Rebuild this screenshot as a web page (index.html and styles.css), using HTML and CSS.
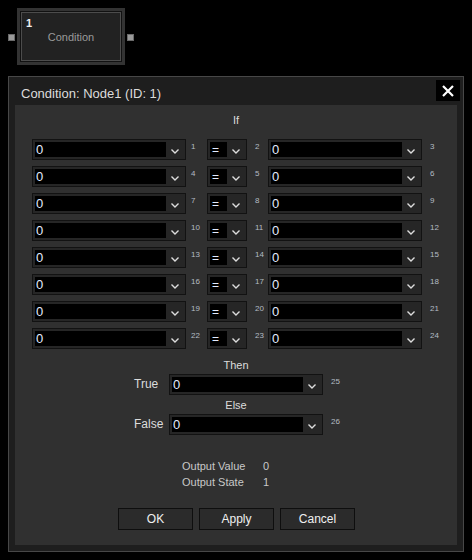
FILE: index.html
```html
<!DOCTYPE html>
<html>
<head>
<meta charset="utf-8">
<link rel="stylesheet" href="styles.css">
</head>
<body>
<div class="node-area">
  <div class="port"></div>
  <div class="node">
    <div class="node-inner">
      <div class="node-id">1</div>
      <div class="node-name">Condition</div>
    </div>
  </div>
  <div class="port"></div>
</div>

<div class="dialog">
  <div class="titlebar">
    <div class="title">Condition: Node1 (ID: 1)</div>
    <div class="close"><svg width="12" height="12" viewBox="0 0 12 12"><path d="M1 1L11 11M11 1L1 11" stroke="#fff" stroke-width="2.2" fill="none"/></svg></div>
  </div>
  <div class="panel">
    <div class="heading if">If</div>
    <div class="rows">
      <div class="combo wide"><div class="field">0</div><div class="chev"><svg width="8" height="5" viewBox="0 0 8 5"><polyline points="0.5,0.5 4,4 7.5,0.5" stroke="#ddd" stroke-width="1.4" fill="none"/></svg></div></div>
      <div class="num n1">1</div>
      <div class="combo op"><div class="field">=</div><div class="chev"><svg width="8" height="5" viewBox="0 0 8 5"><polyline points="0.5,0.5 4,4 7.5,0.5" stroke="#ddd" stroke-width="1.4" fill="none"/></svg></div></div>
      <div class="num">2</div>
      <div class="combo wide"><div class="field">0</div><div class="chev"><svg width="8" height="5" viewBox="0 0 8 5"><polyline points="0.5,0.5 4,4 7.5,0.5" stroke="#ddd" stroke-width="1.4" fill="none"/></svg></div></div>
      <div class="num">3</div>

      <div class="combo wide"><div class="field">0</div><div class="chev"><svg width="8" height="5" viewBox="0 0 8 5"><polyline points="0.5,0.5 4,4 7.5,0.5" stroke="#ddd" stroke-width="1.4" fill="none"/></svg></div></div>
      <div class="num n1">4</div>
      <div class="combo op"><div class="field">=</div><div class="chev"><svg width="8" height="5" viewBox="0 0 8 5"><polyline points="0.5,0.5 4,4 7.5,0.5" stroke="#ddd" stroke-width="1.4" fill="none"/></svg></div></div>
      <div class="num">5</div>
      <div class="combo wide"><div class="field">0</div><div class="chev"><svg width="8" height="5" viewBox="0 0 8 5"><polyline points="0.5,0.5 4,4 7.5,0.5" stroke="#ddd" stroke-width="1.4" fill="none"/></svg></div></div>
      <div class="num">6</div>

      <div class="combo wide"><div class="field">0</div><div class="chev"><svg width="8" height="5" viewBox="0 0 8 5"><polyline points="0.5,0.5 4,4 7.5,0.5" stroke="#ddd" stroke-width="1.4" fill="none"/></svg></div></div>
      <div class="num n1">7</div>
      <div class="combo op"><div class="field">=</div><div class="chev"><svg width="8" height="5" viewBox="0 0 8 5"><polyline points="0.5,0.5 4,4 7.5,0.5" stroke="#ddd" stroke-width="1.4" fill="none"/></svg></div></div>
      <div class="num">8</div>
      <div class="combo wide"><div class="field">0</div><div class="chev"><svg width="8" height="5" viewBox="0 0 8 5"><polyline points="0.5,0.5 4,4 7.5,0.5" stroke="#ddd" stroke-width="1.4" fill="none"/></svg></div></div>
      <div class="num">9</div>

      <div class="combo wide"><div class="field">0</div><div class="chev"><svg width="8" height="5" viewBox="0 0 8 5"><polyline points="0.5,0.5 4,4 7.5,0.5" stroke="#ddd" stroke-width="1.4" fill="none"/></svg></div></div>
      <div class="num n1">10</div>
      <div class="combo op"><div class="field">=</div><div class="chev"><svg width="8" height="5" viewBox="0 0 8 5"><polyline points="0.5,0.5 4,4 7.5,0.5" stroke="#ddd" stroke-width="1.4" fill="none"/></svg></div></div>
      <div class="num">11</div>
      <div class="combo wide"><div class="field">0</div><div class="chev"><svg width="8" height="5" viewBox="0 0 8 5"><polyline points="0.5,0.5 4,4 7.5,0.5" stroke="#ddd" stroke-width="1.4" fill="none"/></svg></div></div>
      <div class="num">12</div>

      <div class="combo wide"><div class="field">0</div><div class="chev"><svg width="8" height="5" viewBox="0 0 8 5"><polyline points="0.5,0.5 4,4 7.5,0.5" stroke="#ddd" stroke-width="1.4" fill="none"/></svg></div></div>
      <div class="num n1">13</div>
      <div class="combo op"><div class="field">=</div><div class="chev"><svg width="8" height="5" viewBox="0 0 8 5"><polyline points="0.5,0.5 4,4 7.5,0.5" stroke="#ddd" stroke-width="1.4" fill="none"/></svg></div></div>
      <div class="num">14</div>
      <div class="combo wide"><div class="field">0</div><div class="chev"><svg width="8" height="5" viewBox="0 0 8 5"><polyline points="0.5,0.5 4,4 7.5,0.5" stroke="#ddd" stroke-width="1.4" fill="none"/></svg></div></div>
      <div class="num">15</div>

      <div class="combo wide"><div class="field">0</div><div class="chev"><svg width="8" height="5" viewBox="0 0 8 5"><polyline points="0.5,0.5 4,4 7.5,0.5" stroke="#ddd" stroke-width="1.4" fill="none"/></svg></div></div>
      <div class="num n1">16</div>
      <div class="combo op"><div class="field">=</div><div class="chev"><svg width="8" height="5" viewBox="0 0 8 5"><polyline points="0.5,0.5 4,4 7.5,0.5" stroke="#ddd" stroke-width="1.4" fill="none"/></svg></div></div>
      <div class="num">17</div>
      <div class="combo wide"><div class="field">0</div><div class="chev"><svg width="8" height="5" viewBox="0 0 8 5"><polyline points="0.5,0.5 4,4 7.5,0.5" stroke="#ddd" stroke-width="1.4" fill="none"/></svg></div></div>
      <div class="num">18</div>

      <div class="combo wide"><div class="field">0</div><div class="chev"><svg width="8" height="5" viewBox="0 0 8 5"><polyline points="0.5,0.5 4,4 7.5,0.5" stroke="#ddd" stroke-width="1.4" fill="none"/></svg></div></div>
      <div class="num n1">19</div>
      <div class="combo op"><div class="field">=</div><div class="chev"><svg width="8" height="5" viewBox="0 0 8 5"><polyline points="0.5,0.5 4,4 7.5,0.5" stroke="#ddd" stroke-width="1.4" fill="none"/></svg></div></div>
      <div class="num">20</div>
      <div class="combo wide"><div class="field">0</div><div class="chev"><svg width="8" height="5" viewBox="0 0 8 5"><polyline points="0.5,0.5 4,4 7.5,0.5" stroke="#ddd" stroke-width="1.4" fill="none"/></svg></div></div>
      <div class="num">21</div>

      <div class="combo wide"><div class="field">0</div><div class="chev"><svg width="8" height="5" viewBox="0 0 8 5"><polyline points="0.5,0.5 4,4 7.5,0.5" stroke="#ddd" stroke-width="1.4" fill="none"/></svg></div></div>
      <div class="num n1">22</div>
      <div class="combo op"><div class="field">=</div><div class="chev"><svg width="8" height="5" viewBox="0 0 8 5"><polyline points="0.5,0.5 4,4 7.5,0.5" stroke="#ddd" stroke-width="1.4" fill="none"/></svg></div></div>
      <div class="num">23</div>
      <div class="combo wide"><div class="field">0</div><div class="chev"><svg width="8" height="5" viewBox="0 0 8 5"><polyline points="0.5,0.5 4,4 7.5,0.5" stroke="#ddd" stroke-width="1.4" fill="none"/></svg></div></div>
      <div class="num">24</div>
    </div>

    <div class="heading then">Then</div>
    <div class="branch">
      <div class="blabel">True</div>
      <div class="combo wide"><div class="field">0</div><div class="chev"><svg width="8" height="5" viewBox="0 0 8 5"><polyline points="0.5,0.5 4,4 7.5,0.5" stroke="#ddd" stroke-width="1.4" fill="none"/></svg></div></div>
      <div class="num">25</div>
    </div>
    <div class="heading else">Else</div>
    <div class="branch">
      <div class="blabel">False</div>
      <div class="combo wide"><div class="field">0</div><div class="chev"><svg width="8" height="5" viewBox="0 0 8 5"><polyline points="0.5,0.5 4,4 7.5,0.5" stroke="#ddd" stroke-width="1.4" fill="none"/></svg></div></div>
      <div class="num">26</div>
    </div>

    <div class="outputs">
      <div class="out-row"><span class="out-label">Output Value</span><span class="out-val">0</span></div>
      <div class="out-row"><span class="out-label">Output State</span><span class="out-val">1</span></div>
    </div>

    <div class="buttons">
      <div class="btn">OK</div>
      <div class="btn">Apply</div>
      <div class="btn">Cancel</div>
    </div>
  </div>
</div>
</body>
</html>
```

FILE: styles.css
```css
* { box-sizing: border-box; }
html, body {
  margin: 0;
  padding: 0;
  background: #000;
  width: 472px;
  height: 560px;
  overflow: hidden;
  font-family: "Liberation Sans", Arial, sans-serif;
  color: #ddd;
}

/* Node */
.node-area {
  display: flex;
  align-items: center;
  padding: 8px 0 0 8px;
  height: 65px;
}
.port {
  width: 7px;
  height: 7px;
  background: #9a9a9a;
  border: 1px solid #6a6a6a;
  margin-top: 2px;
}
.node {
  width: 108px;
  height: 57px;
  margin: 0 2px;
  background: #111;
  border: 3px solid #333;
  padding: 1px;
}
.node-inner {
  width: 100%;
  height: 100%;
  border: 1px solid #4c4c4c;
  background: #222;
  display: flex;
  flex-direction: column;
  padding: 4px 0 0 4px;
}
.node-id {
  font-size: 11px;
  font-weight: bold;
  color: #f2f2f2;
  line-height: 12px;
}
.node-name {
  font-size: 11px;
  color: #9a9a9a;
  text-align: center;
  margin-top: 2px;
  margin-left: -4px;
  line-height: 13px;
}

/* Dialog */
.dialog {
  margin: 11px 0 0 8px;
  width: 456px;
  height: 476px;
  background: #1e1e1e;
  border: 1px solid #474747;
  padding: 0 6px 6px 6px;
  display: flex;
  flex-direction: column;
}
.titlebar {
  height: 28px;
  display: flex;
  align-items: center;
  justify-content: space-between;
  padding-left: 6px;
  margin-right: -3px;
}
.title {
  font-size: 13px;
  color: #dcdcdc;
  padding-top: 4px;
}
.close {
  width: 24px;
  height: 21px;
  background: #000;
  display: flex;
  align-items: center;
  justify-content: center;
  margin-top: 3px;
  align-self: flex-start;
}
.panel {
  flex: 1;
  background: #303030;
  display: flex;
  flex-direction: column;
}

.heading {
  text-align: center;
  font-size: 11px;
  line-height: 14px;
  color: #dcdcdc;
}
.if { margin-top: 8px; }
.then { margin-top: 9px; }
.else { margin-top: 3px; }

.rows {
  margin-top: 12px;
  margin-left: 17px;
  display: grid;
  grid-template-columns: 154px 21px 40px 21px 154px 30px;
  grid-auto-rows: 21px;
  row-gap: 6px;
}
.num {
  font-size: 8px;
  color: #b4bcc4;
  padding-left: 8px;
  padding-top: 3px;
  line-height: 9px;
}
.num.n1 { padding-left: 5px; }

.combo {
  height: 21px;
  border: 1px solid #121212;
  background: #262626;
  display: flex;
  padding: 2px;
}
.combo.wide { width: 154px; }
.combo.op { width: 40px; }
.field {
  background: #000;
  height: 15px;
  font-size: 13px;
  line-height: 16px;
  color: #e4ecff;
  padding-left: 1px;
  overflow: hidden;
}
.wide .field { width: 131px; }
.op .field { width: 17px; font-size: 12px; padding-left: 2px; }
.chev {
  flex: 1;
  display: flex;
  align-items: center;
  justify-content: center;
  padding-top: 3px;
}

.branch {
  display: flex;
  margin-top: 2px;
  padding-left: 119px;
  height: 21px;
}
.blabel {
  width: 35px;
  font-size: 12px;
  line-height: 21px;
  color: #dcdcdc;
}

.outputs {
  margin-top: 23px;
  padding-left: 167px;
}
.out-row {
  display: flex;
  font-size: 11px;
  line-height: 16px;
  color: #c8c8c8;
}
.out-label { width: 81px; }

.buttons {
  margin-top: 18px;
  display: flex;
  justify-content: center;
  gap: 6px;
  padding-left: 1px;
}
.btn {
  width: 75px;
  height: 22px;
  border: 1px solid #0e0e0e;
  background: #2b2b2b;
  color: #f0f0f0;
  font-size: 12px;
  display: flex;
  align-items: center;
  justify-content: center;
}
```
